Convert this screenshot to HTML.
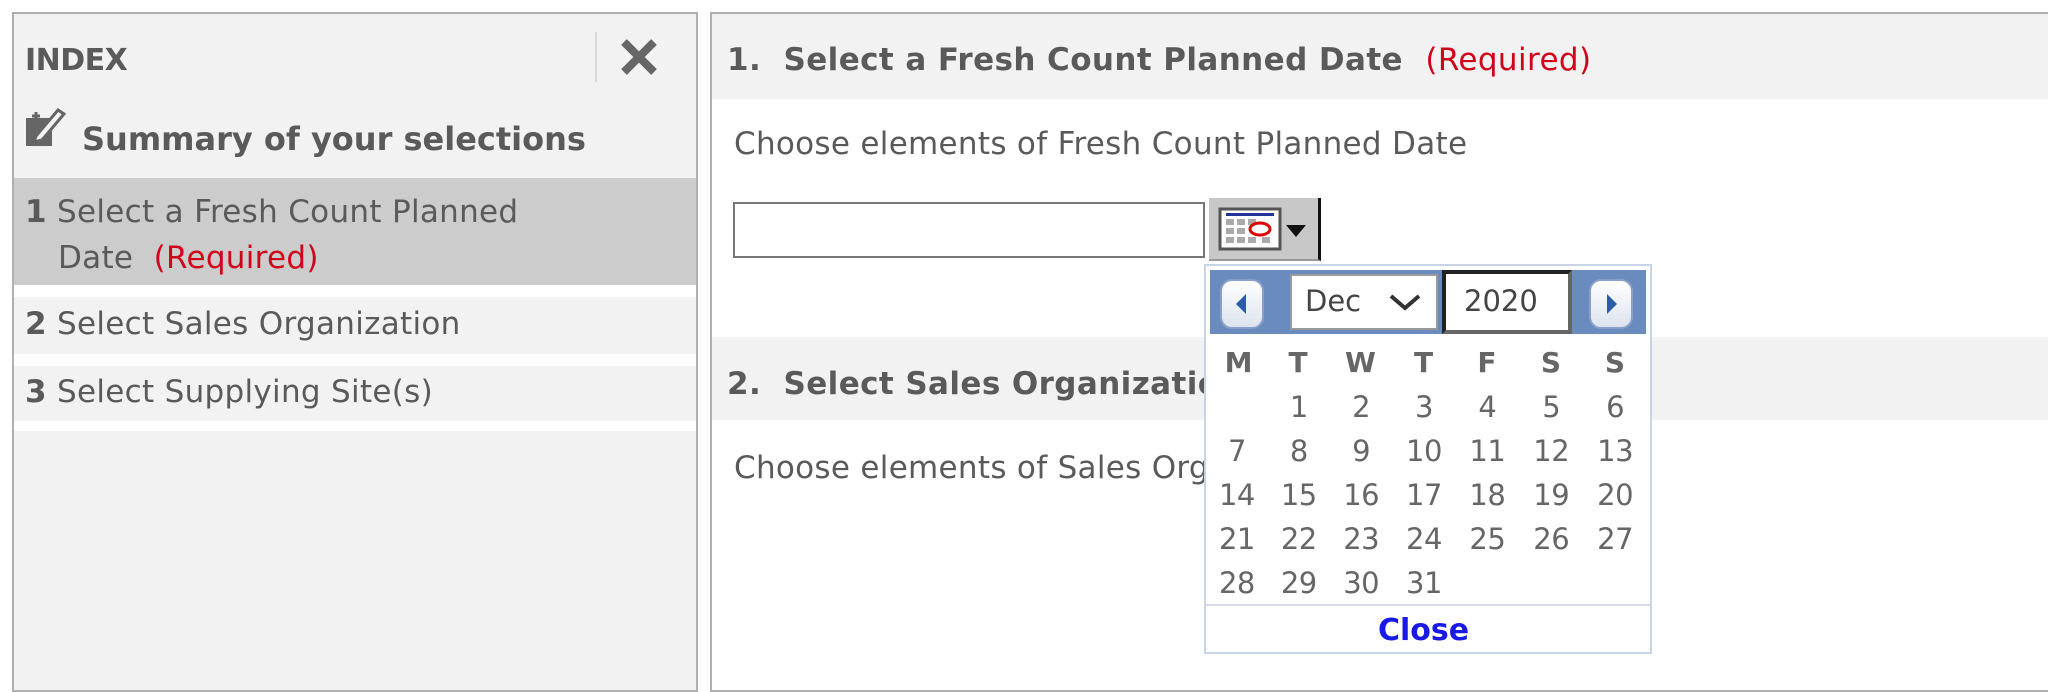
<!DOCTYPE html>
<html><head><style>
*{margin:0;padding:0;box-sizing:border-box}
body{width:2048px;height:675px;background:#fff;position:relative;overflow:hidden;font-family:"DejaVu Sans","Liberation Sans",sans-serif;color:#5a5a5a}
.abs{position:absolute;white-space:nowrap}
.t{font-size:31px;letter-spacing:0.3px}
.b{font-weight:bold}
.req{color:#d0021b}
</style></head><body>
<!-- left panel -->
<div class="abs" style="left:12px;top:12px;width:686px;height:680px;background:#f2f2f2;border:2px solid #b0b0b0"></div>
<div class="abs t b" style="left:25px;top:43px;font-size:30px;letter-spacing:-0.5px">INDEX</div>
<div class="abs" style="left:595px;top:32px;width:2px;height:50px;background:#d8d8d8"></div>
<svg class="abs" style="left:620px;top:39px" width="38" height="36" viewBox="0 0 38 36"><path d="M4 3 L34 33 M34 3 L4 33" stroke="#666" stroke-width="8"/></svg>
<svg class="abs" style="left:24px;top:104px" width="50" height="50" viewBox="0 0 50 50"><rect x="2" y="14" width="26" height="28" fill="#666"/><path d="M12 32 L34 6 L40 10 L18 36 L10 38 Z" fill="#f2f2f2" stroke="#666" stroke-width="3"/><path d="M8 12h8M12 8v8" stroke="#666" stroke-width="3"/></svg>
<div class="abs b" style="left:82px;top:120px;font-size:32px;letter-spacing:0px">Summary of your selections</div>
<div class="abs" style="left:14px;top:178px;width:682px;height:107px;background:#cccccc"></div>
<div class="abs t" style="left:25px;top:189px;line-height:46px"><b>1</b> Select a Fresh Count Planned<br><span style="padding-left:33px">Date</span>&nbsp; <span class="req">(Required)</span></div>
<div class="abs" style="left:14px;top:285px;width:682px;height:12px;background:#fff"></div>
<div class="abs t" style="left:25px;top:306px"><b>2</b> Select Sales Organization</div>
<div class="abs" style="left:14px;top:354px;width:682px;height:12px;background:#fff"></div>
<div class="abs t" style="left:25px;top:374px"><b>3</b> Select Supplying Site(s)</div>
<div class="abs" style="left:14px;top:421px;width:682px;height:10px;background:#fff"></div>
<!-- right panel -->
<div class="abs" style="left:710px;top:12px;width:1400px;height:680px;border:2px solid #b0b0b0;background:#fff"></div>
<div class="abs" style="left:712px;top:14px;width:1340px;height:85px;background:#f2f2f2"></div>
<div class="abs b" style="left:727px;top:42px;font-size:31px;letter-spacing:0.4px">1.&nbsp; Select a Fresh Count Planned Date&nbsp; <span class="req" style="font-weight:normal">(Required)</span></div>
<div class="abs t" style="left:734px;top:126px">Choose elements of Fresh Count Planned Date</div>
<div class="abs" style="left:733px;top:202px;width:472px;height:56px;border:2px solid #777;background:#fff"></div>
<div class="abs" style="left:1209px;top:198px;width:112px;height:63px;background:#c8c8c8;border-right:3px solid #111;border-bottom:2px solid #999"></div>
<svg class="abs" style="left:1218px;top:205px" width="100" height="50" viewBox="0 0 100 50"><rect x="2" y="4" width="60" height="40" fill="#fff" stroke="#555" stroke-width="3"/><rect x="8" y="8" width="48" height="3" fill="#223399"/><g fill="#aaa"><rect x="8" y="14" width="8" height="6"/><rect x="19" y="14" width="8" height="6"/><rect x="30" y="14" width="8" height="6"/><rect x="8" y="23" width="8" height="6"/><rect x="19" y="23" width="8" height="6"/><rect x="8" y="32" width="8" height="6"/><rect x="19" y="32" width="8" height="6"/><rect x="30" y="32" width="8" height="6"/><rect x="44" y="32" width="8" height="6"/></g><ellipse cx="42" cy="24" rx="10" ry="6" fill="none" stroke="#d00" stroke-width="3"/><path d="M68 20h20l-10 12z" fill="#111"/></svg>
<div class="abs" style="left:712px;top:337px;width:1340px;height:83px;background:#f2f2f2"></div>
<div class="abs b" style="left:727px;top:366px;font-size:31px;letter-spacing:0.4px">2.&nbsp; Select Sales Organization</div>
<div class="abs t" style="left:734px;top:450px">Choose elements of Sales Organization</div>
<!-- calendar -->
<div class="abs" style="left:1204px;top:264px;width:448px;height:390px;background:#fff;border:2px solid #c9d3e6"></div>
<div class="abs" style="left:1210px;top:270px;width:436px;height:64px;background:#6a8bbd"></div>
<div class="abs" style="left:1220px;top:279px;width:44px;height:50px;border-radius:12px;background:linear-gradient(#fff,#dde3ee);border:2px solid #8aa0c8"></div>
<svg class="abs" style="left:1232px;top:292px" width="20" height="24"><path d="M14 2 L4 12 L14 22Z" fill="#2a5ca8"/></svg>
<div class="abs" style="left:1589px;top:279px;width:44px;height:50px;border-radius:12px;background:linear-gradient(#fff,#dde3ee);border:2px solid #8aa0c8"></div>
<svg class="abs" style="left:1602px;top:292px" width="20" height="24"><path d="M5 2 L15 12 L5 22Z" fill="#2a5ca8"/></svg>
<div class="abs" style="left:1290px;top:274px;width:148px;height:56px;background:#fff;border:2px solid #999"></div>
<div class="abs" style="left:1305px;top:284px;font-size:29px;color:#444">Dec</div>
<svg class="abs" style="left:1387px;top:290px" width="36" height="24"><path d="M4 6 L18 18 L32 6" fill="none" stroke="#333" stroke-width="4"/></svg>
<div class="abs" style="left:1442px;top:270px;width:130px;height:64px;background:#fff;border:4px solid #222;border-right-color:#666;border-bottom-color:#666"></div>
<div class="abs" style="left:1464px;top:284px;font-size:29px;color:#444">2020</div>
<div class="abs" style="left:1205px;top:346px;width:446px;font-size:28px;font-weight:bold;color:#666">
<div style="display:flex"><span style="width:62px;text-align:center;padding-left:5px">M</span><span style="width:62px;text-align:center">T</span><span style="width:63px;text-align:center">W</span><span style="width:63px;text-align:center">T</span><span style="width:64px;text-align:center">F</span><span style="width:64px;text-align:center">S</span><span style="width:64px;text-align:center">S</span></div></div>
<div class="abs" id="g" style="left:1201px;top:385px;width:446px;font-size:29px;color:#666;letter-spacing:-0.5px;line-height:44px"></div>
<div class="abs" style="left:1206px;top:604px;width:444px;height:2px;background:#d6dbe6"></div>
<div class="abs b" style="left:1378px;top:613px;font-size:30px;color:#1a1ae6">Close</div>
<script>
var h='',w=[62,62,63,63,64,64,64],d=[['',1,2,3,4,5,6],[7,8,9,10,11,12,13],[14,15,16,17,18,19,20],[21,22,23,24,25,26,27],[28,29,30,31,'','','']];
d.forEach(function(r){h+='<div style="display:flex;padding-left:5px">';r.forEach(function(v,i){h+='<span style="width:'+w[i]+'px;text-align:center">'+v+'</span>'});h+='</div>'});
document.getElementById('g').innerHTML=h;
</script>
</body></html>
